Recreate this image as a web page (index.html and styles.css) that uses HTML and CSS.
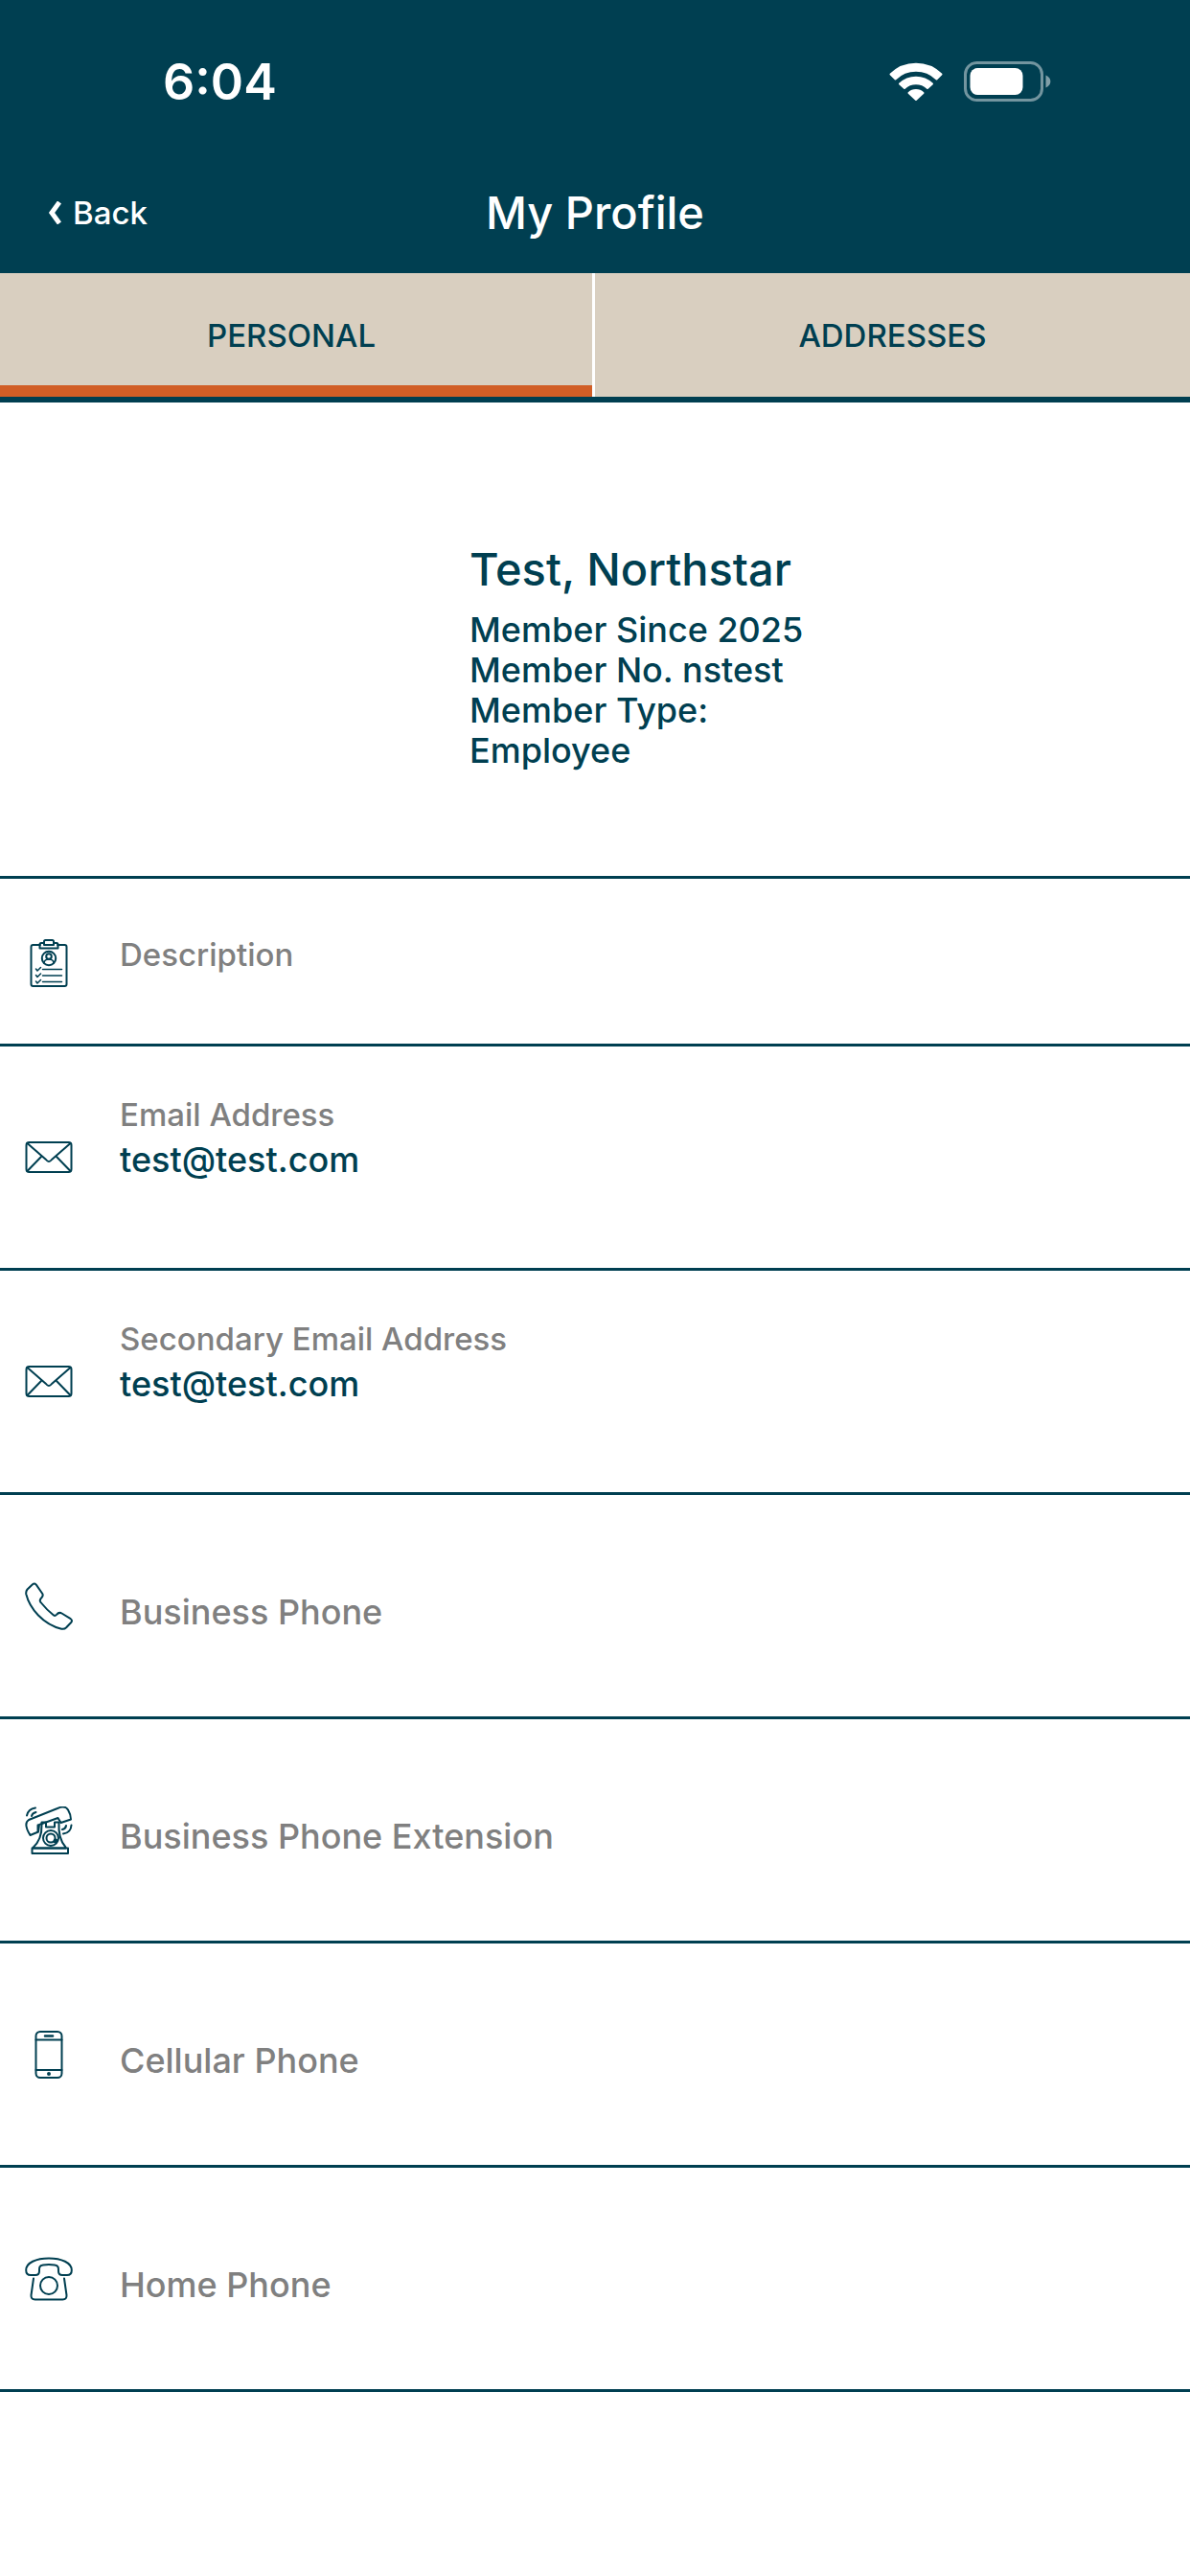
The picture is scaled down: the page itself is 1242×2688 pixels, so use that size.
FILE: index.html
```html
<!DOCTYPE html>
<html lang="en">
  <head>
    <meta charset="utf-8">
    <title>My Profile</title>
    <link rel="stylesheet" href="styles.css">
  </head>
  <body>
    <header class="header">
      <div class="status-bar">
        <span class="time">6:04</span>
        <div class="status-icons">
          <svg class="wifi" viewBox="0 0 56 42" fill="#fff" stroke="#fff" stroke-width="2" stroke-linejoin="round">
            <path d="M1.500 13.500a38 38 0 0 1 53 0l-5 5a31 31 0 0 0-43 0z"/>
            <path d="M11 23.500a24.500 24.500 0 0 1 34 0l-5 4.500a17.500 17.500 0 0 0-24 0z"/>
            <path d="M20.500 33a11 11 0 0 1 15 0L28 40z"/>
          </svg>
          <svg class="battery" viewBox="0 0 92 42">
            <rect x="1.500" y="1.500" width="80" height="39" rx="12" fill="none" stroke="#fff" stroke-opacity=".45" stroke-width="3"/>
            <rect x="6.500" y="7" width="55" height="28" rx="8" fill="#fff"/>
            <path d="M85.500 14.500c6.500 2.500 6.500 10.500 0 13z" fill="#fff" fill-opacity=".5"/>
          </svg>
        </div>
      </div>
      <nav class="nav-bar">
        <button class="back" type="button">
          <svg class="chevron" viewBox="0 0 14 24" fill="none" stroke="#fff" stroke-width="5">
            <path d="M12 1L4 12l8 11"/>
          </svg>
          Back
        </button>
        <h1>My Profile</h1>
      </nav>
    </header>

    <div class="tabs">
      <button class="tab active" type="button">PERSONAL</button>
      <button class="tab" type="button">ADDRESSES</button>
    </div>

    <main>
      <section class="profile">
        <div class="photo"></div>
        <div class="member">
          <h2>Test, Northstar</h2>
          <p>Member Since 2025</p>
          <p>Member No. nstest</p>
          <p>Member Type:<br>Employee</p>
        </div>
      </section>

      <ul class="details">
        <li class="row short">
          <svg class="icon" viewBox="0 0 50 50">
            <path d="M16 6H8.500a2 2 0 0 0-2 2v39a2 2 0 0 0 2 2h33a2 2 0 0 0 2-2V8a2 2 0 0 0-2-2H34"/>
            <path d="M15.500 9.500V5.500a1.500 1.500 0 0 1 1.500-1.500h3V2.500a1.500 1.500 0 0 1 1.500-1.500h7a1.500 1.500 0 0 1 1.500 1.500V4h3a1.500 1.500 0 0 1 1.500 1.500v4zM20 4v2h10V4"/>
            <circle cx="25" cy="20" r="7.200"/>
            <circle cx="25" cy="18" r="2.800"/>
            <path d="M20 25c0-5.500 10-5.500 10 0M18.500 31.500h20M18.500 38h20M18.500 44.500h20" stroke-width="1.500"/>
            <path d="M11.500 31l1.500 2 3.500-3.500M11.500 37.500l1.500 2 3.500-3.500M11.500 44l1.500 2 3.500-3.500" stroke-width="1.500"/>
          </svg>
          <div class="text">
            <span class="label">Description</span>
          </div>
        </li>
        <li class="row email">
          <svg class="icon" viewBox="0 0 50 50">
            <rect x="1.500" y="9" width="47" height="31" rx="3"/>
            <path d="M2.500 10l19.500 17q3 4 6 0L47.500 10M2.500 39l15-15.500M47.500 39l-15-15.500"/>
          </svg>
          <div class="text">
            <span class="label">Email Address</span>
            <span class="value">test@test.com</span>
          </div>
        </li>
        <li class="row email">
          <svg class="icon" viewBox="0 0 50 50">
            <rect x="1.500" y="9" width="47" height="31" rx="3"/>
            <path d="M2.500 10l19.500 17q3 4 6 0L47.500 10M2.500 39l15-15.500M47.500 39l-15-15.500"/>
          </svg>
          <div class="text">
            <span class="label">Secondary Email Address</span>
            <span class="value">test@test.com</span>
          </div>
        </li>
        <li class="row phone">
          <svg class="icon" viewBox="0 0 50 50">
            <path d="M2.500 7.500L8 2.200q2-1.500 3.800.4l6.500 9.400q1 2-.6 3.700-3.200 3-1.200 5.300 6 7.500 13.500 13.500 1.500 1 3-.7 2.500-3 5.500-1.300l9.200 5.700q2.300 1.600.5 3.800l-5 5.300q-2 2-5 1.400C19 44 5 27.500 1.300 12.500Q.8 9.500 2.500 7.500z"/>
          </svg>
          <div class="text">
            <span class="label">Business Phone</span>
          </div>
        </li>
        <li class="row phone">
          <svg class="icon" viewBox="0 0 50 50">
            <path d="M2 9.500Q3.500 2.500 11 1.500M7 10q.5-3 4.500-4M48.500 19.500q-.5 8-8.500 9M43 20q-.5 3.500-4 4"/>
            <path d="M13.500 26V19.500L15 19l-1 7.500L5.500 30Q-2 18 4 14L34 2q8-3.500 11 1.500 3 5 3 10l-10.500 3.500-3-5L15 19"/>
            <path d="M17.500 19.500V16.500h4.500v5h9v-5h4.500q-1 17 7 26v1H8q10-9 9.500-24z"/>
            <circle cx="27" cy="33" r="8"/>
            <circle cx="27" cy="33" r="4.500"/>
            <circle cx="32" cy="36" r="1.500" class="dot"/>
            <path d="M7.500 43.500h37.500V49H7.500z"/>
          </svg>
          <div class="text">
            <span class="label">Business Phone Extension</span>
          </div>
        </li>
        <li class="row phone">
          <svg class="icon" viewBox="0 0 50 50">
            <rect x="11.500" y="1" width="27" height="48" rx="4.500"/>
            <path d="M11.500 9.500h27M11.500 41h27"/>
            <path d="M21 5.500h8" stroke-width="2.500"/>
            <circle cx="25" cy="45" r="1" class="dot"/>
          </svg>
          <div class="text">
            <span class="label">Cellular Phone</span>
          </div>
        </li>
        <li class="row phone">
          <svg class="icon" viewBox="0 0 50 50">
            <path d="M1.200 16C1 8 12 3.500 25 3.500S49 8 48.800 16q0 5-4.800 5h-5q-4 0-4-4c0-3 .5-6-4-6.500q-6-.8-12 0c-4.500.5-4 3.500-4 6.500q0 4-4 4H6q-4.800 0-4.800-5z"/>
            <path d="M9 24.500L6.500 42q-.3 4.500 4 4.500h29q4.300 0 4-4.500L41 24.500"/>
            <circle cx="25" cy="32" r="9"/>
          </svg>
          <div class="text">
            <span class="label">Home Phone</span>
          </div>
        </li>
      </ul>
    </main>
  </body>
</html>
```
FILE: styles.css
```css
* {
  box-sizing: border-box;
}
body {
  margin: 0;
  background-color: #fff;
  color: #003f51;
  font-family: Inter, "Open Sans", sans-serif;
  font-weight: 500;
}
h1,
h2,
p,
ul {
  margin: 0;
  padding: 0;
  font-weight: 500;
}
button {
  border: none;
  background: none;
  padding: 0;
  font: inherit;
  color: inherit;
}
.header {
  background-color: #003f51;
  color: #fff;
}
.status-bar {
  display: flex;
  justify-content: space-between;
  align-items: center;
  height: 170px;
  padding: 0 144px 0 170px;
}
.time {
  font-size: 52px;
  font-weight: 600;
}
.status-icons {
  display: flex;
  gap: 22px;
}
.wifi {
  width: 56px;
  height: 42px;
}
.battery {
  width: 92px;
  height: 42px;
}
.nav-bar {
  display: grid;
  grid-template-columns: 1fr auto 1fr;
  align-items: center;
  height: 115px;
  padding: 0 50px 12px;
}
.nav-bar h1 {
  font-size: 47px;
}
.back {
  display: flex;
  align-items: center;
  gap: 12px;
  font-size: 33px;
}
.chevron {
  width: 14px;
  height: 24px;
}
.tabs {
  display: grid;
  grid-template-columns: 1fr 1fr;
  border-bottom: 6px solid #003f51;
}
.tab {
  height: 129px;
  background-color: #d9cfc0;
  font-size: 33px;
}
.tab.active {
  border-right: 3px solid #fff;
  box-shadow: inset 0 -12px #d15e26;
  padding-right: 10px;
}
.profile {
  display: grid;
  grid-template-columns: 490px 1fr;
  padding: 144px 0 110px;
}
.member h2 {
  font-size: 47px;
  line-height: 60px;
  margin-bottom: 12px;
}
.member p {
  font-size: 36px;
  line-height: 42px;
}
.details {
  list-style: none;
  border-bottom: 3px solid #003f51;
}
.row {
  display: flex;
  align-items: center;
  gap: 49px;
  min-height: 234px;
  border-top: 3px solid #003f51;
  padding: 0 26px;
}
.row.short {
  min-height: 175px;
  padding-top: 4px;
}
.icon {
  width: 50px;
  height: 50px;
  fill: none;
  stroke: #003f51;
  stroke-width: 2;
  stroke-linejoin: round;
  stroke-linecap: round;
}
.dot {
  fill: #003f51;
}
.text {
  display: flex;
  flex-direction: column;
  padding-bottom: 18px;
}
.label {
  color: #808080;
  font-size: 33px;
  line-height: 46px;
}
.value {
  font-size: 36px;
  line-height: 48px;
}
.email .text {
  padding-bottom: 42px;
}
.phone .text {
  padding: 12px 0 0;
}
.phone .label {
  font-size: 36px;
}
```
